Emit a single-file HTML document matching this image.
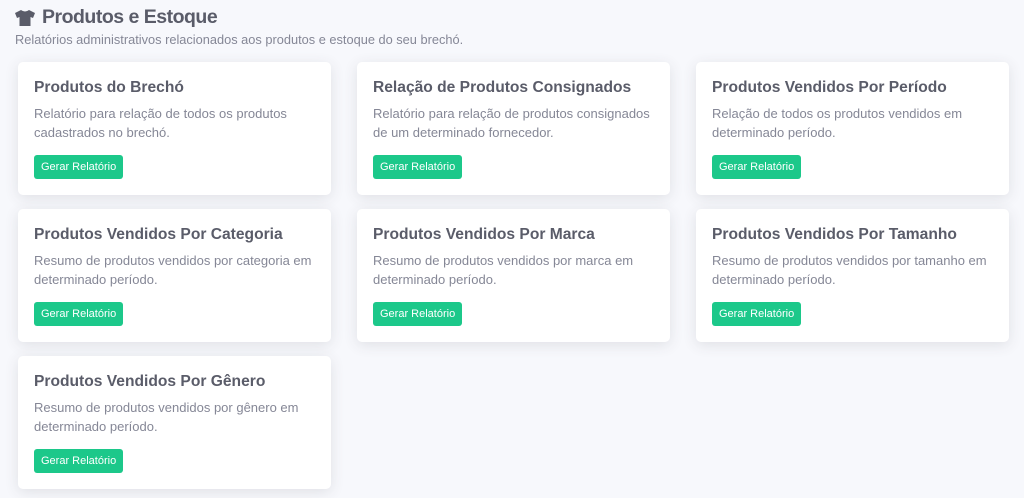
<!DOCTYPE html>
<html><head><meta charset="utf-8"><style>
*{box-sizing:border-box;margin:0;padding:0}
body{width:1024px;height:498px;overflow:hidden;background:#f7f8fc;font-family:"Liberation Sans",sans-serif;position:relative}
h1{position:absolute;left:15px;top:6px;font-size:19.5px;letter-spacing:-0.5px;font-weight:bold;color:#5a5c69;display:flex;align-items:center;gap:7px}
.sub{position:absolute;left:15px;top:32px;font-size:12.8px;color:#858796}
.card{position:absolute;width:313px;height:133px;background:#fff;border-radius:5px;box-shadow:0 3px 14px rgba(58,59,69,.12);padding:17px 16px}
.card h2{font-size:15.6px;font-weight:bold;color:#5a5c69;margin-bottom:7px;white-space:nowrap}
.card p{font-size:13px;line-height:19px;color:#858796;height:43px}
.btn{position:absolute;left:16px;top:93px;height:24px;padding:0 7px;background:#1cc88a;color:#fff;font-size:11px;line-height:24px;border-radius:3px}
</style></head><body>
<h1><svg width="20" height="16" viewBox="0 0 20 16"><path d="M6 0 L0 3 L2 8 L4.5 7 L4.5 16 L15.5 16 L15.5 7 L18 8 L20 3 L14 0 Q10 3 6 0Z" fill="#5a5c69"/></svg>Produtos e Estoque</h1>
<div class="sub">Relatórios administrativos relacionados aos produtos e estoque do seu brechó.</div>

<div class="card" style="left:18px;top:62px"><h2>Produtos do Brechó</h2><p>Relatório para relação de todos os produtos cadastrados no brechó.</p><span class="btn">Gerar Relatório</span></div>
<div class="card" style="left:357px;top:62px"><h2>Relação de Produtos Consignados</h2><p>Relatório para relação de produtos consignados de um determinado fornecedor.</p><span class="btn">Gerar Relatório</span></div>
<div class="card" style="left:696px;top:62px"><h2>Produtos Vendidos Por Período</h2><p>Relação de todos os produtos vendidos em determinado período.</p><span class="btn">Gerar Relatório</span></div>

<div class="card" style="left:18px;top:209px"><h2>Produtos Vendidos Por Categoria</h2><p>Resumo de produtos vendidos por categoria em determinado período.</p><span class="btn">Gerar Relatório</span></div>
<div class="card" style="left:357px;top:209px"><h2>Produtos Vendidos Por Marca</h2><p>Resumo de produtos vendidos por marca em determinado período.</p><span class="btn">Gerar Relatório</span></div>
<div class="card" style="left:696px;top:209px"><h2>Produtos Vendidos Por Tamanho</h2><p>Resumo de produtos vendidos por tamanho em determinado período.</p><span class="btn">Gerar Relatório</span></div>

<div class="card" style="left:18px;top:356px"><h2>Produtos Vendidos Por Gênero</h2><p>Resumo de produtos vendidos por gênero em determinado período.</p><span class="btn">Gerar Relatório</span></div>
</body></html>
